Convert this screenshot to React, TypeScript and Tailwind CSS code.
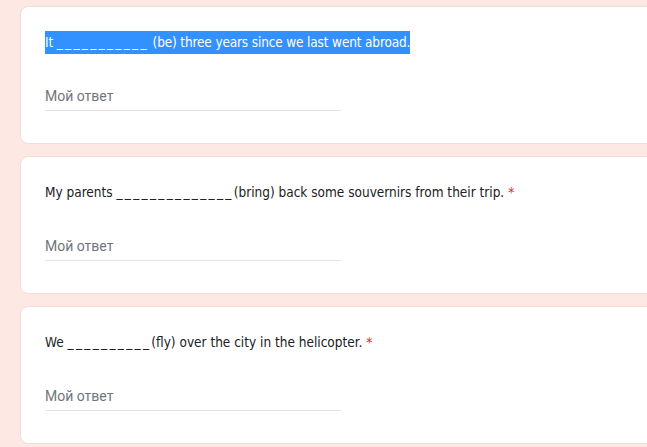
import React from 'react';

interface Question {
  before: string;
  blank: string;
  after: string;
  required: boolean;
  selected?: boolean;
}

const questions: Question[] = [
  { before: 'It ', blank: '___________', after: ' (be) three years since we last went abroad.', required: false, selected: true },
  { before: 'My parents ', blank: '______________', after: '(bring) back some souvernirs from their trip.', required: true },
  { before: 'We ', blank: '__________', after: '(fly) over the city in the helicopter.', required: true },
];

const QuestionCard: React.FC<{ q: Question }> = ({ q }) => {
  return (
    <div className="h-[138px] w-[660px] shrink-0 rounded-lg border border-[#f1dcd7] bg-white pl-6 pt-6">
      <div className="flex h-[23px] items-center text-[13.5px] leading-[23px] text-[#202124] [font-family:'Liberation_Sans_Narrow','DejaVu_Sans_Condensed',sans-serif]">
        <span className={q.selected ? 'inline-block h-[23px] bg-[#3390ff] tracking-[-0.15px] text-white' : 'inline-block h-[23px]'}>
          {q.before}
          <span className="tracking-[2.3px]">{q.blank}</span>
          {q.after}
        </span>
        {q.required && <span className="ml-[4px] text-[#d93025]">*</span>}
      </div>
      <div className="mt-[31px] flex h-[26px] w-[296px] items-start border-b border-[#e3e3e3]">
        <span className="text-[14px] leading-[22px] text-[#70757a] [font-family:Roboto,sans-serif]">
          Мой ответ
        </span>
      </div>
    </div>
  );
};

export default function App() {
  return (
    <div className="h-[447px] w-[647px] overflow-hidden bg-[#fde8e3] pl-5 pt-[6px]">
      <div className="flex flex-col gap-3">
        {questions.map((q, i) => (
          <QuestionCard key={i} q={q} />
        ))}
      </div>
    </div>
  );
}
